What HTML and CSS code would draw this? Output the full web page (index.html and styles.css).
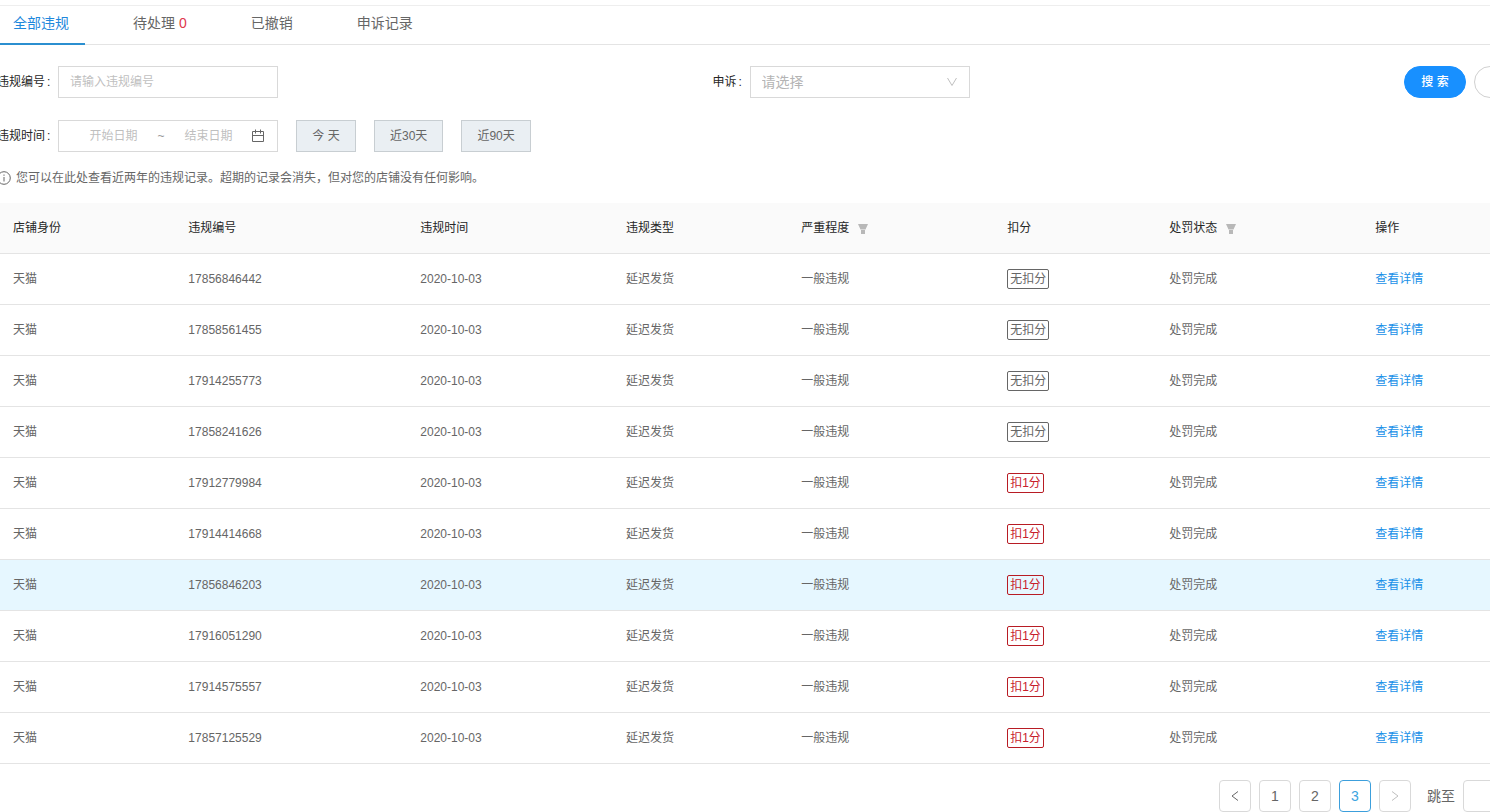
FILE: index.html
```html
<!DOCTYPE html>
<html lang="zh-CN">
<head>
<meta charset="utf-8" />
<title>违规记录</title>
<meta name="viewport" content="width=device-width,initial-scale=1" />
<link rel="stylesheet" href="styles.css">
</head>
<body>
	<div class="page">
		<nav class="tabs">
			<a class="tab active" href="#all">全部违规</a>
			<a class="tab" href="#pending">待处理 <span class="count">0</span></a>
			<a class="tab" href="#revoked">已撤销</a>
			<a class="tab" href="#appeal">申诉记录</a>
		</nav>

		<form class="search">
			<div class="search-row">
				<div class="fields">
					<div class="field">
						<label for="code">违规编号</label>
						<input class="box" id="code" type="text" placeholder="请输入违规编号">
					</div>
					<div class="field">
						<label for="appeal">申诉</label>
						<div class="select">
							<select class="box" id="appeal">
								<option>请选择</option>
							</select>
							<svg width="12" height="12" viewBox="0 0 12 12"><path d="M1.500 2L6 9.500 10.500 2" /></svg>
						</div>
					</div>
				</div>
				<div class="actions">
					<button class="pill primary" type="button">搜 索</button>
					<button class="pill" type="reset" aria-label="重置"></button>
				</div>
			</div>
			<div class="search-row">
				<div class="field">
					<label for="start">违规时间</label>
					<div class="box range">
						<input id="start" type="text" placeholder="开始日期">
						<span class="tilde">~</span>
						<input type="text" placeholder="结束日期" aria-label="结束日期">
						<svg width="14" height="14" viewBox="0 0 14 14"><path d="M1.500 2.500h11v10h-11zM1.500 6.500h11M4.500 .5v4M9.500 .5v4" /></svg>
					</div>
				</div>
				<div class="quick">
					<button type="button">今 天</button>
					<button type="button">近30天</button>
					<button type="button">近90天</button>
				</div>
			</div>
		</form>

		<p class="notice">
			<svg width="14" height="14" viewBox="0 0 14 14"><circle cx="7" cy="7" r="6.300" /><path d="M7 6v4.500M7 3.500v1.300" /></svg>
			您可以在此处查看近两年的违规记录。超期的记录会消失，但对您的店铺没有任何影响。
		</p>

		<table class="records">
			<colgroup>
				<col class="c-shop"><col class="c-code"><col class="c-time"><col class="c-type">
				<col class="c-level"><col class="c-score"><col class="c-state"><col>
			</colgroup>
			<thead>
				<tr>
					<th>店铺身份</th>
					<th>违规编号</th>
					<th>违规时间</th>
					<th>违规类型</th>
					<th>严重程度<button class="filter" type="button" aria-label="筛选严重程度"><svg width="12" height="12" viewBox="0 0 12 12"><path d="M1 1h10L8.500 6.500h-5zM4 7h4v4H4z" /></svg></button></th>
					<th>扣分</th>
					<th>处罚状态<button class="filter" type="button" aria-label="筛选处罚状态"><svg width="12" height="12" viewBox="0 0 12 12"><path d="M1 1h10L8.500 6.500h-5zM4 7h4v4H4z" /></svg></button></th>
					<th>操作</th>
				</tr>
			</thead>
			<tbody>
				<tr><td>天猫</td><td>17856846442</td><td>2020-10-03</td><td>延迟发货</td><td>一般违规</td><td><span class="tag">无扣分</span></td><td>处罚完成</td><td><a href="#detail">查看详情</a></td></tr>
				<tr><td>天猫</td><td>17858561455</td><td>2020-10-03</td><td>延迟发货</td><td>一般违规</td><td><span class="tag">无扣分</span></td><td>处罚完成</td><td><a href="#detail">查看详情</a></td></tr>
				<tr><td>天猫</td><td>17914255773</td><td>2020-10-03</td><td>延迟发货</td><td>一般违规</td><td><span class="tag">无扣分</span></td><td>处罚完成</td><td><a href="#detail">查看详情</a></td></tr>
				<tr><td>天猫</td><td>17858241626</td><td>2020-10-03</td><td>延迟发货</td><td>一般违规</td><td><span class="tag">无扣分</span></td><td>处罚完成</td><td><a href="#detail">查看详情</a></td></tr>
				<tr><td>天猫</td><td>17912779984</td><td>2020-10-03</td><td>延迟发货</td><td>一般违规</td><td><span class="tag red">扣1分</span></td><td>处罚完成</td><td><a href="#detail">查看详情</a></td></tr>
				<tr><td>天猫</td><td>17914414668</td><td>2020-10-03</td><td>延迟发货</td><td>一般违规</td><td><span class="tag red">扣1分</span></td><td>处罚完成</td><td><a href="#detail">查看详情</a></td></tr>
				<tr class="hover"><td>天猫</td><td>17856846203</td><td>2020-10-03</td><td>延迟发货</td><td>一般违规</td><td><span class="tag red">扣1分</span></td><td>处罚完成</td><td><a href="#detail">查看详情</a></td></tr>
				<tr><td>天猫</td><td>17916051290</td><td>2020-10-03</td><td>延迟发货</td><td>一般违规</td><td><span class="tag red">扣1分</span></td><td>处罚完成</td><td><a href="#detail">查看详情</a></td></tr>
				<tr><td>天猫</td><td>17914575557</td><td>2020-10-03</td><td>延迟发货</td><td>一般违规</td><td><span class="tag red">扣1分</span></td><td>处罚完成</td><td><a href="#detail">查看详情</a></td></tr>
				<tr><td>天猫</td><td>17857125529</td><td>2020-10-03</td><td>延迟发货</td><td>一般违规</td><td><span class="tag red">扣1分</span></td><td>处罚完成</td><td><a href="#detail">查看详情</a></td></tr>
			</tbody>
		</table>

		<div class="pager">
			<button type="button" aria-label="上一页"><svg width="12" height="12" viewBox="0 0 12 12"><path d="M9 1.500L3 6l6 4.500" /></svg></button>
			<button type="button">1</button>
			<button type="button">2</button>
			<button class="current" type="button">3</button>
			<button type="button" aria-label="下一页" disabled><svg width="12" height="12" viewBox="0 0 12 12"><path d="M3 1.500L9 6l-6 4.500" /></svg></button>
			<label for="jump">跳至</label>
			<input id="jump" type="text">
		</div>
	</div>
</body>
</html>
```
FILE: styles.css
```css
* {
	box-sizing: border-box;
	margin: 0;
	padding: 0;
}
html,body {
	overflow: hidden;
}
body {
	background: #fff;
	color: #666;
	font-family: "Liberation Sans", "Noto Sans CJK SC", sans-serif;
	font-size: 12px;
	line-height: 20px;
}
button,input,select {
	font: inherit;
	color: inherit;
}
svg {
	display: block;
	fill: none;
	stroke: currentColor;
}
a {
	color: #1890e8;
	text-decoration: none;
}
/* content is wider than the window on both sides */
.page {
	margin: 5px -70px 0 -3px;
}

.tabs {
	display: flex;
	gap: 32px;
	border-top: 1px solid #eee;
	border-bottom: 1px solid #e4e4e4;
	font-size: 14px;
	line-height: 22px;
}
.tab {
	margin-bottom: -1px;
	padding: 6px 16px 9px;
	border-bottom: 2px solid transparent;
	color: #666;
}
.tab.active {
	border-color: #2b8fd0;
	color: #1e88dc;
}
.count {
	color: #e0384a;
}

.search {
	display: grid;
	gap: 22px;
	padding: 21px 24px 0 0;
}
.search-row {
	display: flex;
}
.fields {
	flex: 1;
	display: grid;
	grid-template-columns: 1fr 1fr;
	gap: 24px;
}
.field {
	display: flex;
	align-items: center;
}
.field label {
	color: #262626;
	white-space: nowrap;
}
.field label::after {
	content: ":";
	display: inline-block;
	width: 3px;
	margin: 0 8px 0 2px;
}
.box {
	width: 220px;
	height: 32px;
	padding: 0 11px;
	border: 1px solid #d9d9d9;
	background: #fff;
}
::placeholder {
	color: #bfbfbf;
	opacity: 1;
}
.select {
	position: relative;
}
.select select {
	display: block;
	appearance: none;
	color: #b4b4b4;
	font-size: 14px;
}
.select svg {
	position: absolute;
	top: 10px;
	right: 12px;
	color: #bfbfbf;
	pointer-events: none;
}
.range {
	display: flex;
	align-items: center;
	padding: 0 12px;
}
.range input {
	flex: 1;
	min-width: 0;
	border: 0;
	text-align: center;
}
.tilde {
	width: 10px;
	color: #999;
	text-align: center;
}
.actions {
	display: flex;
	gap: 8px;
}
.pill {
	width: 62px;
	height: 32px;
	border: 1px solid #d0d0d0;
	border-radius: 16px;
	background: #fff;
}
.pill.primary {
	border-color: #1890ff;
	background: #1890ff;
	color: #fff;
	font-weight: 500;
}
.quick {
	display: flex;
	gap: 18px;
	margin-left: 18px;
}
.quick button {
	min-width: 60px;
	height: 32px;
	padding: 0 15px;
	border: 1px solid #c8ced2;
	background: #eaeff3;
}

.notice {
	display: flex;
	align-items: center;
	gap: 5px;
	margin: 16px 0 15px;
}

.records {
	width: 100%;
	border-collapse: separate;
	border-spacing: 0;
	table-layout: fixed;
}
.c-shop {
	width: 11.22%;
}
.c-code {
	width: 14.84%;
}
.c-time {
	width: 13.16%;
}
.c-type {
	width: 11.21%;
}
.c-level {
	width: 13.18%;
}
.c-score {
	width: 10.37%;
}
.c-state {
	width: 13.18%;
}
.records th,.records td {
	height: 51px;
	padding: 0 16px;
	border-bottom: 1px solid #e4e4e4;
	text-align: left;
	white-space: nowrap;
}
.records th {
	background: #fafafa;
	color: #262626;
	font-weight: 400;
}
.records .hover td {
	background: #e6f7ff;
}
.filter {
	margin-left: 8px;
	border: 0;
	background: none;
	color: #b8b8b8;
	vertical-align: middle;
}
.filter svg {
	fill: currentColor;
	stroke: none;
}
.tag {
	display: inline-block;
	padding: 0 2px;
	border: 1px solid #666;
	border-radius: 2px;
	line-height: 18px;
}
.tag.red {
	border-color: #b81c24;
	color: #c8202c;
}

.pager {
	display: flex;
	align-items: center;
	justify-content: flex-end;
	gap: 8px;
	margin-top: 16px;
	padding-right: 47px;
	font-size: 14px;
}
.pager button {
	display: flex;
	align-items: center;
	justify-content: center;
	width: 32px;
	height: 32px;
	border: 1px solid #d9d9d9;
	border-radius: 4px;
	background: #fff;
}
.pager .current {
	border-color: #3c9fdc;
	color: #3ca4e0;
}
.pager button:disabled {
	color: #bfbfbf;
}
.pager label {
	margin-left: 8px;
}
.pager input {
	width: 50px;
	height: 32px;
	border: 1px solid #d9d9d9;
	border-radius: 4px;
}
```
